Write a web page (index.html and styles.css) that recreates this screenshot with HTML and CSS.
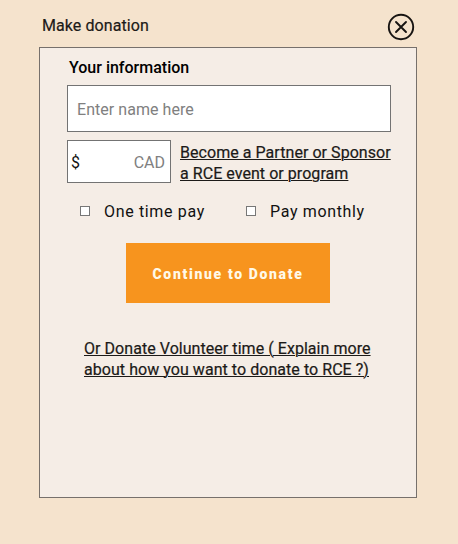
FILE: index.html
```html
<!DOCTYPE html>
<html lang="en">
<head>
<meta charset="utf-8">
<title>Make donation</title>
<link rel="stylesheet" href="styles.css">
</head>
<body>
<header class="header">
  <h1 class="title">Make donation</h1>
  <button class="close" aria-label="Close">
    <svg width="28" height="28" viewBox="0 0 28 28" fill="none" stroke="#171412" stroke-width="1.9" stroke-linecap="round"><circle cx="14" cy="14" r="12.2"/><path d="M9 9l10 10M19 9l-10 10"/></svg>
  </button>
</header>
<main class="panel">
  <h2 class="subtitle">Your information</h2>
  <div class="field name">Enter name here</div>
  <div class="row">
    <div class="field amount"><span class="dollar">$</span><span>CAD</span></div>
    <a class="link">Become a Partner or Sponsor<br>a RCE event or program</a>
  </div>
  <div class="options">
    <label class="option"><span class="box"></span>One time pay</label>
    <label class="option"><span class="box"></span>Pay monthly</label>
  </div>
  <button class="submit">Continue to Donate</button>
  <a class="link volunteer">Or Donate Volunteer time ( Explain more<br>about how you want to donate to RCE ?)</a>
</main>
</body>
</html>
```
FILE: styles.css
```css
* { box-sizing: border-box; }
body { margin: 0; height: 544px; background: #f5e3cd; font: 16px/21px Roboto, sans-serif; color: #111; overflow: hidden; }
.header { height: 47px; padding: 13px 43px 0 42px; display: flex; justify-content: space-between; align-items: flex-start; }
.title { margin: 2px 0 0; font-size: 16px; font-weight: 400; letter-spacing: .08px; line-height: 21px; color: #1c1a18; -webkit-text-stroke: .2px #1c1a18; }
.close { width: 28px; height: 28px; padding: 0; border: 0; background: none; }
.close svg { display: block; }
.panel { width: 378px; height: 451px; margin-left: 39px; padding: 9px 25px 0 27px; border: 1px solid #76706c; background: #f5ede6; }
.subtitle { margin: 0 0 7px 2px; font-size: 16px; font-weight: 500; line-height: 21px; color: #000; }
.field { display: flex; align-items: center; border: 1px solid #737373; background: #fff; color: #808080; }
.name { height: 47px; padding: 2px 9px 0; letter-spacing: .05px; }
.row { display: flex; gap: 9px; margin-top: 8px; }
.amount { flex: none; width: 104px; height: 43px; justify-content: space-between; padding: 2px 5px 0 3px; }
.dollar { color: #111; }
.link { color: #1c1a18; font-weight: 400; letter-spacing: .05px; text-decoration: underline 1px; white-space: nowrap; margin-top: 2px; -webkit-text-stroke: .2px #1c1a18; }
.options { display: flex; margin: 17px 0 0 13px; }
.option { flex: none; display: flex; align-items: center; width: 166px; gap: 14px; letter-spacing: .65px; white-space: nowrap; }
.option + .option { width: 130px; }
.box { width: 10px; height: 10px; margin-top: -2px; border: 1px solid #777; background: #fff; }
.submit { display: block; width: 204px; height: 60px; margin: 21px 0 0 59px; padding: 2px 0 0; border: 0; background: #f7941e; color: #fff9e8; font: 900 14px Roboto, sans-serif; letter-spacing: 1.65px; }
.volunteer { display: block; margin: 35px 0 0 17px; }
```
